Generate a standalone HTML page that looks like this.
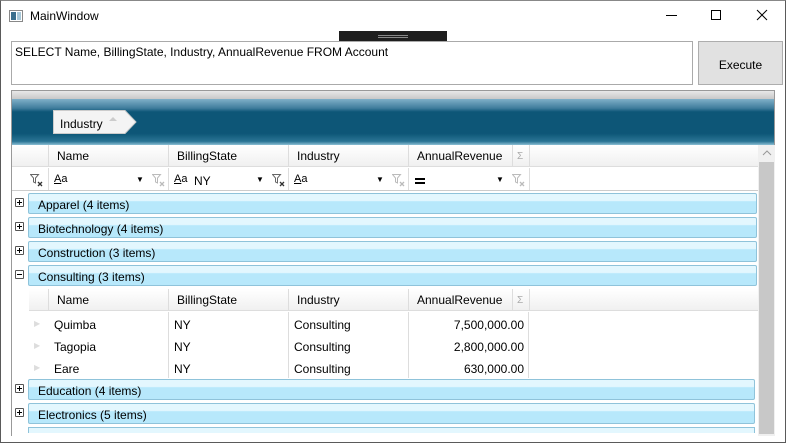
<!DOCTYPE html>
<html><head><meta charset="utf-8"><style>
*{margin:0;padding:0;box-sizing:border-box}
body{width:786px;height:443px;overflow:hidden;background:#fff;font-family:"Liberation Sans",Arial,sans-serif;font-size:12px;color:#000;position:relative}
.a{position:absolute}
.win{left:0;top:0;width:786px;height:443px;border:1px solid #5a5a5a;border-top-color:#888}
.gb{position:absolute;left:28px;width:729px;height:21px;border:1px solid #8fc3da;border-radius:2px;background:linear-gradient(#e3f7fe 0,#e3f7fe 35%,#b7e8fb 40%,#b7e8fb 100%);padding:4px 0 0 9px;font-size:12px}
.exp{position:absolute;left:15px;width:9px;height:9px;border:1px solid #555;border-radius:1px;background:#fff}
.exp:before{content:"";position:absolute;left:1px;top:3px;width:5px;height:1px;background:#000}
.exp.p:after{content:"";position:absolute;left:3px;top:1px;width:1px;height:5px;background:#000}
.hd{position:absolute;height:22px;background:linear-gradient(#fff,#f0f0f0);border-bottom:1px solid #ddd}
.hc{position:absolute;top:0;height:22px;border-left:1px solid #ddd;padding:4px 0 0 8px}
.fc{position:absolute;top:0;height:22px;border-left:1px solid #ddd}
.cell{position:absolute;font-size:12px}
.fi{position:absolute;top:6px}
</style></head><body>
<div class="a win"></div>
<svg class="a" style="left:9px;top:10px" width="14" height="12"><rect x="0.5" y="0.5" width="13" height="11" fill="#fff" stroke="#888"/><rect x="2" y="2" width="5" height="8" fill="#3a6e8c"/><rect x="8" y="2" width="4" height="8" fill="#a8c8d8"/></svg>
<div class="a" style="left:30px;top:9px;font-size:12px">MainWindow</div>
<div class="a" style="left:666px;top:15px;width:11px;height:1px;background:#000"></div>
<div class="a" style="left:711px;top:10px;width:10px;height:10px;border:1px solid #000"></div>
<svg class="a" style="left:756px;top:9px" width="12" height="12"><path d="M1 1L11 11M11 1L1 11" stroke="#000" stroke-width="1"/></svg>
<div class="a" style="left:339px;top:31px;width:108px;height:10px;background:#1e1e1e"></div>
<div class="a" style="left:378px;top:35px;width:30px;height:1px;background:#888"></div>
<div class="a" style="left:378px;top:37px;width:30px;height:1px;background:#888"></div>
<div class="a" style="left:11px;top:41px;width:682px;height:44px;border:1px solid #aaa;padding:3px 0 0 3px">SELECT Name, BillingState, Industry, AnnualRevenue FROM Account</div>
<div class="a" style="left:698px;top:41px;width:85px;height:44px;border:1px solid #adadad;background:#e1e1e1;text-align:center;padding-top:16px">Execute</div>
<div class="a" style="left:11px;top:90px;width:764px;height:346px;border:1px solid #999;border-bottom:none"></div>
<div class="a" style="left:12px;top:91px;width:762px;height:8px;background:linear-gradient(#e8e8e8,#c8c8c8)"></div>
<div class="a" style="left:12px;top:99px;width:762px;height:46px;background:linear-gradient(#7fb0c8 0,#3f7c9c 20%,#0d5677 28%,#0d5677 75%,#2a7494 92%,#8cbfd4 100%)"></div>
<svg class="a" style="left:53px;top:110px" width="84" height="24"><path d="M0.5 0.5H72L83 12L72 23.5H0.5Z" fill="#f4f4f4" stroke="#ccc"/><path d="M56 11L60 7L64 11Z" fill="#ccc"/></svg>
<div class="a" style="left:60px;top:117px">Industry</div>
<div class="hd" style="left:12px;top:145px;width:746px">
 <div class="hc" style="left:36px;width:120px">Name</div>
 <div class="hc" style="left:156px;width:120px">BillingState</div>
 <div class="hc" style="left:276px;width:120px">Industry</div>
 <div class="hc" style="left:396px;width:104px">AnnualRevenue</div>
 <div class="hc" style="left:500px;width:17px;color:#aaa;font-size:10px;padding:6px 0 0 4px">Σ</div>
 <div class="hc" style="left:517px;width:1px"></div>
</div>
<div class="a" style="left:12px;top:168px;width:746px;height:23px;background:#fff;border-bottom:1px solid #ccc">
 <div class="fc" style="left:36px"></div><div class="fc" style="left:156px"></div><div class="fc" style="left:276px"></div><div class="fc" style="left:396px"></div><div class="fc" style="left:517px"></div>
 <svg class="fi" style="left:18px" width="14" height="13"><path d="M0.5 0.5H8.5L5.5 4V9L3.5 8V4Z" fill="none" stroke="#666"/><path d="M8 8L12 12M12 8L8 12" stroke="#333" stroke-width="1.3"/></svg>
 <div class="cell" style="left:42px;top:5px;font-size:11px"><u>A</u>a</div>
 <div class="cell" style="left:124px;top:7px;font-size:8px">▼</div>
 <svg class="fi" style="left:140px" width="14" height="13"><path d="M0.5 0.5H8.5L5.5 4V9L3.5 8V4Z" fill="none" stroke="#bbb"/><path d="M8 8L12 12M12 8L8 12" stroke="#bbb" stroke-width="1.3"/></svg>
 <div class="cell" style="left:162px;top:5px;font-size:11px"><u>A</u>a</div>
 <div class="cell" style="left:182px;top:6px">NY</div>
 <div class="cell" style="left:244px;top:7px;font-size:8px">▼</div>
 <svg class="fi" style="left:260px" width="14" height="13"><path d="M0.5 0.5H8.5L5.5 4V9L3.5 8V4Z" fill="none" stroke="#666"/><path d="M8 8L12 12M12 8L8 12" stroke="#333" stroke-width="1.3"/></svg>
 <div class="cell" style="left:282px;top:5px;font-size:11px"><u>A</u>a</div>
 <div class="cell" style="left:364px;top:7px;font-size:8px">▼</div>
 <svg class="fi" style="left:380px" width="14" height="13"><path d="M0.5 0.5H8.5L5.5 4V9L3.5 8V4Z" fill="none" stroke="#bbb"/><path d="M8 8L12 12M12 8L8 12" stroke="#bbb" stroke-width="1.3"/></svg>
 <div class="a" style="left:403px;top:10px;width:10px;height:2px;background:#000"></div>
 <div class="a" style="left:403px;top:14px;width:10px;height:2px;background:#000"></div>
 <div class="cell" style="left:484px;top:7px;font-size:8px">▼</div>
 <svg class="fi" style="left:500px" width="14" height="13"><path d="M0.5 0.5H8.5L5.5 4V9L3.5 8V4Z" fill="none" stroke="#bbb"/><path d="M8 8L12 12M12 8L8 12" stroke="#bbb" stroke-width="1.3"/></svg>
</div>
<div class="a" style="left:758px;top:145px;width:17px;height:291px;background:#f0f0f0"></div>
<svg class="a" style="left:762px;top:150px" width="10" height="7"><path d="M1 5L5 1L9 5" fill="none" stroke="#999"/></svg>
<div class="a" style="left:759px;top:162px;width:15px;height:272px;background:#c8c8c8"></div>
<div class="exp p" style="top:198px"></div><div class="gb" style="top:193px">Apparel (4 items)</div>
<div class="exp p" style="top:222px"></div><div class="gb" style="top:217px">Biotechnology (4 items)</div>
<div class="exp p" style="top:246px"></div><div class="gb" style="top:241px">Construction (3 items)</div>
<div class="exp" style="top:270px"></div><div class="gb" style="top:265px">Consulting (3 items)</div>
<div class="hd" style="left:29px;top:289px;width:729px">
 <div class="hc" style="left:19px;width:120px">Name</div>
 <div class="hc" style="left:139px;width:120px">BillingState</div>
 <div class="hc" style="left:259px;width:120px">Industry</div>
 <div class="hc" style="left:379px;width:104px">AnnualRevenue</div>
 <div class="hc" style="left:483px;width:17px;color:#aaa;font-size:10px;padding:6px 0 0 4px">Σ</div>
 <div class="hc" style="left:500px;width:1px"></div>
</div>
<div class="a" style="left:168px;top:312px;width:1px;height:66px;background:#ddd"></div>
<div class="a" style="left:288px;top:312px;width:1px;height:66px;background:#ddd"></div>
<div class="a" style="left:408px;top:312px;width:1px;height:66px;background:#ddd"></div>
<div class="a" style="left:528px;top:312px;width:1px;height:66px;background:#ddd"></div>
<div class="cell" style="left:34px;top:319px;color:#ddd;font-size:8px">▶</div>
<div class="cell" style="left:34px;top:341px;color:#ddd;font-size:8px">▶</div>
<div class="cell" style="left:34px;top:363px;color:#ddd;font-size:8px">▶</div>
<div class="cell" style="left:54px;top:318px">Quimba</div><div class="cell" style="left:174px;top:318px">NY</div><div class="cell" style="left:294px;top:318px">Consulting</div><div class="cell" style="left:409px;top:318px;width:115px;text-align:right">7,500,000.00</div>
<div class="cell" style="left:54px;top:340px">Tagopia</div><div class="cell" style="left:174px;top:340px">NY</div><div class="cell" style="left:294px;top:340px">Consulting</div><div class="cell" style="left:409px;top:340px;width:115px;text-align:right">2,800,000.00</div>
<div class="cell" style="left:54px;top:362px">Eare</div><div class="cell" style="left:174px;top:362px">NY</div><div class="cell" style="left:294px;top:362px">Consulting</div><div class="cell" style="left:409px;top:362px;width:115px;text-align:right">630,000.00</div>
<div class="exp p" style="top:384px"></div><div class="gb" style="top:379px;width:727px">Education (4 items)</div>
<div class="exp p" style="top:408px"></div><div class="gb" style="top:403px;width:727px">Electronics (5 items)</div>
<div class="a" style="left:28px;top:427px;width:727px;height:6px;border:1px solid #8fc3da;border-bottom:none;background:#e3f7fe"></div>
</body></html>
